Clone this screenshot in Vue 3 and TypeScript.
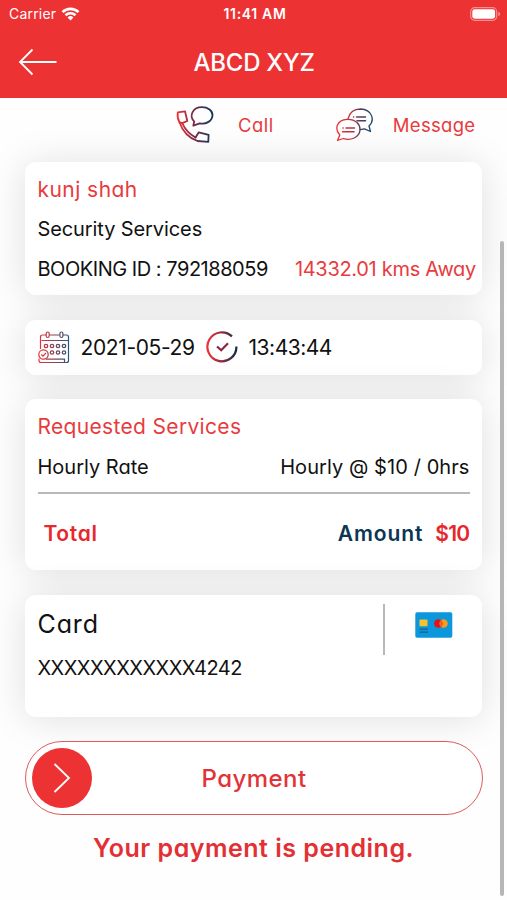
<script setup lang="ts">
interface Booking {
  customer: string
  service: string
  id: string
  distance: string
  date: string
  time: string
}

const booking: Booking = {
  customer: 'kunj shah',
  service: 'Security Services',
  id: '792188059',
  distance: '14332.01 kms Away',
  date: '2021-05-29',
  time: '13:43:44',
}
</script>

<template>
  <div class="screen">
    <header class="header">
      <div class="status">
        <div class="carrier">
          <span>Carrier</span>
          <svg width="19" height="14" viewBox="0 0 19 14">
            <path d="M.6 4.2a12.7 12.7 0 0 1 17.8 0l-1.8 1.9a10.1 10.1 0 0 0-14.2 0z" />
            <path d="M3.6 7.3a8.5 8.5 0 0 1 11.8 0l-1.8 1.9a5.9 5.9 0 0 0-8.2 0z" />
            <path d="M6.6 10.4a4.2 4.2 0 0 1 5.8 0l-2.9 3z" />
          </svg>
        </div>
        <span class="clock">11:41 AM</span>
        <svg class="battery" width="31" height="14" viewBox="0 0 31 14">
          <rect x=".7" y=".7" width="26" height="12.6" rx="4" fill="none" stroke="#fff" stroke-opacity=".45" stroke-width="1.2" />
          <rect x="2.3" y="2.3" width="22.8" height="9.4" rx="2.4" />
          <path d="M28.4 4.8c2.2.8 2.2 3.6 0 4.4z" opacity=".5" />
        </svg>
      </div>
      <div class="nav">
        <svg class="back" width="40" height="28" viewBox="0 0 40 28">
          <path d="M38.500 14H2M14.500 1.500L2 14l12.500 12.500" />
        </svg>
        <h1 class="title">ABCD XYZ</h1>
      </div>
    </header>

    <main class="body">
      <div class="actions">
        <button class="action">
          <svg width="38" height="38" viewBox="0 0 38 38">
            <defs>
              <linearGradient id="callTone" gradientUnits="userSpaceOnUse" x1="2" y1="0" x2="37" y2="0">
                <stop offset="0" stop-color="#ed3234" />
                <stop offset=".45" stop-color="#7a2b48" />
                <stop offset="1" stop-color="#0b3a58" />
              </linearGradient>
            </defs>
            <g fill="none" stroke="url(#callTone)" stroke-width="1.800" stroke-linejoin="round" stroke-linecap="round">
              <path d="M18.200 15.500C12.500 9.500 17 1.200 26 1.200C32 1.200 36.500 4.500 36.500 9C36.500 15 30 18.600 23.800 17.300L17.300 19.600Z" />
              <path d="M1.800 6.300L9 5.300L11.300 15L6.200 17.200L3.400 16.200C1.700 13 1.300 9.500 1.800 6.300Z" />
              <path d="M6.200 17.200C9 23.500 13 28 19.500 31.500" />
              <path d="M3.400 16.200C6.500 25 13 32 21.500 35L32.300 35.800L32.600 28.800L22.800 26.300L19.500 31.500" />
            </g>
          </svg>
          <span class="call">Call</span>
        </button>
        <button class="action">
          <svg width="38" height="34" viewBox="0 0 38 34">
            <defs>
              <linearGradient id="chatTone" gradientUnits="userSpaceOnUse" x1="1" y1="0" x2="37" y2="0">
                <stop offset="0" stop-color="#ed3234" />
                <stop offset=".4" stop-color="#c03340" />
                <stop offset=".72" stop-color="#48405a" />
                <stop offset="1" stop-color="#0f4a70" />
              </linearGradient>
            </defs>
            <g fill="none" stroke="url(#chatTone)" stroke-width="1.300" stroke-linejoin="round" stroke-linecap="round">
              <path d="M2.500 32.500L4.800 27C-1 20.500 2 12 12 11.300C21 11 25.300 16.500 25 22C24.500 29.500 15.500 33 8.300 30.500Z" />
              <path d="M13 11C14.500 4.500 19.500 1 25.500 1C37.500 1.500 40 12.500 34 18L35.500 23.500L29.500 20.800L25 21.700" />
              <path d="M8 20h.2M11 20h8.500M7.500 23.800h11.500M18.500 9h.2M21.500 9h9M22 12.700h8.500" stroke-width="1.500" />
            </g>
          </svg>
          <span class="message">Message</span>
        </button>
      </div>

      <section class="card details">
        <p class="row name">{{ booking.customer }}</p>
        <p class="row service">{{ booking.service }}</p>
        <p class="row split">
          <span class="id">BOOKING ID : {{ booking.id }}</span>
          <span class="away">{{ booking.distance }}</span>
        </p>
      </section>

      <section class="card schedule">
        <svg width="32" height="33" viewBox="0 0 32 33">
          <defs>
            <linearGradient id="calTone" gradientUnits="userSpaceOnUse" x1="1" y1="0" x2="31" y2="0">
              <stop offset="0" stop-color="#ed3234" />
              <stop offset=".5" stop-color="#8a4254" />
              <stop offset="1" stop-color="#205a80" />
            </linearGradient>
          </defs>
          <g fill="none" stroke="url(#calTone)" stroke-width="1.200">
            <path d="M2.500 18V6Q2.500 4 4.500 4H8M11.500 4H21.500M25 4H28.500Q30.500 4 30.500 6V29.500Q30.500 31.500 28.500 31.500H3Q1 31.500 1 29.500V27.500M3.500 9.500H30M8 28.200H26.500V31" />
            <rect x="8.200" y="1" width="3" height="5.500" rx="1.500" />
            <rect x="21.900" y="1" width="3" height="5.500" rx="1.500" />
            <circle cx="5.500" cy="23.500" r="4.700" />
            <path d="M3.300 23.500L5 25.200L8 21.800" />
            <g stroke-width="1.300">
              <circle cx="8" cy="15" r="1.700" /><circle cx="14" cy="15" r="1.700" /><circle cx="20" cy="15" r="1.700" /><circle cx="26" cy="15" r="1.700" />
              <circle cx="14" cy="21.500" r="1.700" /><circle cx="20" cy="21.500" r="1.700" /><circle cx="26" cy="21.500" r="1.700" />
            </g>
          </g>
        </svg>
        <span class="date">{{ booking.date }}</span>
        <svg class="tick" width="32" height="32" viewBox="0 0 32 32">
          <defs>
            <linearGradient id="tickTone" gradientUnits="userSpaceOnUse" x1="1" y1="0" x2="31" y2="0">
              <stop offset="0" stop-color="#ed3234" />
              <stop offset=".4" stop-color="#a82c3c" />
              <stop offset="1" stop-color="#0b2f4a" />
            </linearGradient>
          </defs>
          <g fill="none" stroke="url(#tickTone)" stroke-width="2.200">
            <path d="M26 5.400A14.500 14.500 0 1 0 30.400 15.500" />
            <path d="M11 15.500L15.200 19.300L22 12.300" stroke="#8a2744" />
          </g>
        </svg>
        <span class="time">{{ booking.time }}</span>
      </section>

      <section class="card services">
        <p class="row heading">Requested Services</p>
        <p class="row split">
          <span class="rate">Hourly Rate</span>
          <span class="price">Hourly @ $10 / 0hrs</span>
        </p>
        <hr class="rule" />
        <p class="row totals">
          <span class="total">Total</span>
          <span class="amount">Amount</span>
          <span class="sum">$10</span>
        </p>
      </section>

      <section class="card payment-card">
        <div class="card-text">
          <p class="card-title">Card</p>
          <p class="card-number">XXXXXXXXXXXX4242</p>
        </div>
        <div class="divider"></div>
        <svg class="card-icon" width="38" height="26" viewBox="0 0 38 26">
          <rect x=".3" y=".3" width="37" height="25.400" rx="1.800" fill="#0c97dc" />
          <rect x="4.500" y="7.500" width="8" height="6.700" rx=".8" fill="#f6c12f" />
          <path d="M4.500 17.200h8.500M4.500 20.200h8.500" stroke="#17608f" stroke-width="1.300" />
          <circle cx="28.500" cy="11.500" r="4.300" fill="#f79a1e" />
          <circle cx="23.300" cy="11.500" r="4.300" fill="#e0131f" />
          <path d="M25.900 8.100a4.300 4.300 0 0 1 0 6.800a4.300 4.300 0 0 1 0-6.800z" fill="#f0641e" />
        </svg>
      </section>

      <button class="pay">
        <span class="knob">
          <svg width="20" height="32" viewBox="0 0 20 32">
            <path d="M2.500 2L17 16L2.500 30" />
          </svg>
        </span>
        <span class="pay-label">Payment</span>
      </button>
      <p class="pending">Your payment is pending.</p>
    </main>
    <div class="scrollbar"></div>
  </div>
</template>

<style>
body {
  margin: 0;
  background: #fff;
}
</style>

<style scoped>
.screen {
  position: relative;
  width: 507px;
  height: 900px;
  overflow: hidden;
  background: #fefefe;
  color: #111;
  font-family: Inter, "Noto Sans", sans-serif;
  font-size: 20px;
  font-feature-settings: "cv11";
  white-space: nowrap;
}
p,
h1 {
  margin: 0;
  font-weight: 400;
}
button {
  padding: 0;
  border: 0;
  background: none;
  color: inherit;
  font: inherit;
  font-feature-settings: inherit;
}
.header {
  position: relative;
  z-index: 2;
  height: 98px;
  background: #ed3234;
  color: #fff;
}
.status {
  display: grid;
  grid-template-columns: 1fr auto 1fr;
  align-items: center;
  height: 27px;
  padding: 0 6px 0 9px;
  font-size: 14px;
  font-feature-settings: normal;
}
.status svg {
  fill: #fff;
}
.carrier {
  display: flex;
  gap: 5px;
  align-items: center;
  letter-spacing: 0.200px;
}
.clock {
  font-weight: 600;
  letter-spacing: 0.650px;
}
.battery {
  justify-self: end;
}
.nav {
  display: grid;
  grid-template-columns: 60px 1fr 60px;
  align-items: center;
  height: 70px;
}
.back {
  margin-left: 18px;
  fill: none;
  stroke: #fff;
  stroke-width: 1.800;
}
.title {
  padding-left: 1px;
  text-align: center;
  font-size: 24px;
  font-weight: 500;
  letter-spacing: -0.250px;
}
.body {
  padding: 0 25px;
}
.actions {
  display: flex;
  height: 54px;
  margin-bottom: 10px;
  padding-left: 151px;
  align-items: center;
  color: #e83b3e;
  font-size: 18.500px;
}
.action {
  display: flex;
  align-items: center;
  gap: 24px;
}
.action + .action {
  margin-left: 61px;
  gap: 20px;
}
.call {
  letter-spacing: 0.500px;
}
.message {
  letter-spacing: 0.300px;
}
.card {
  box-sizing: border-box;
  margin-bottom: 24.500px;
  padding: 0 12.500px;
  border-radius: 11px;
  background: #fff;
  box-shadow: 0 2px 38px rgba(0, 0, 0, 0.125);
}
.row {
  display: flex;
  height: 40px;
  align-items: center;
}
.split {
  justify-content: space-between;
}
.details {
  height: 133px;
  padding-top: 7px;
  padding-right: 6px;
}
.name,
.heading {
  color: #e83b3e;
  font-size: 21px;
}
.name {
  letter-spacing: 0.450px;
}
.heading {
  letter-spacing: 0.330px;
}
.service {
  letter-spacing: -0.100px;
}
.id {
  letter-spacing: -0.470px;
}
.away {
  color: #e83b3e;
  letter-spacing: -0.300px;
}
.schedule {
  display: flex;
  height: 55px;
  align-items: center;
  font-size: 21px;
}
.date {
  margin-left: 11px;
  letter-spacing: -0.380px;
}
.tick {
  margin: 0 11px 0 11px;
}
.time {
  letter-spacing: -0.500px;
}
.services {
  height: 171px;
  padding-top: 7.500px;
}
.price {
  letter-spacing: 0.080px;
}
.rule {
  height: 1.500px;
  margin: 5.500px 0 0;
  border: 0;
  background: #b8b8b8;
}
.totals {
  height: 79px;
  padding-left: 6px;
  color: #e6282c;
  font-size: 21px;
  font-weight: 600;
}
.total {
  letter-spacing: 0.650px;
}
.amount {
  margin-left: auto;
  color: #0b3552;
  letter-spacing: 0.900px;
}
.sum {
  margin-left: 12px;
  letter-spacing: -0.700px;
}
.payment-card {
  display: flex;
  height: 122px;
}
.card-title {
  padding-top: 9px;
  font-size: 25px;
  letter-spacing: 0.900px;
  line-height: 40px;
}
.card-number {
  letter-spacing: -0.530px;
  line-height: 48px;
}
.card-text {
  width: 345.500px;
}
.divider {
  width: 2px;
  height: 51px;
  margin-top: 9.500px;
  background: #b8b8b8;
}
.card-icon {
  margin: 17px 0 0 30px;
}
.pay {
  position: relative;
  display: flex;
  box-sizing: border-box;
  width: 458px;
  height: 74px;
  align-items: center;
  padding: 0 6px;
  border: 1.500px solid #e05a5c;
  border-radius: 37px;
  background: #fff;
}
.knob {
  display: grid;
  width: 60px;
  height: 60px;
  place-items: center;
  border-radius: 50%;
  background: #ed3234;
}
.knob path {
  fill: none;
  stroke: #fff;
  stroke-width: 1.800;
}
.pay-label {
  flex: 1;
  padding-right: 60px;
  color: #e23337;
  font-size: 24px;
  font-weight: 500;
  letter-spacing: 0.450px;
  text-align: center;
}
.pending {
  color: #e23034;
  font-size: 25px;
  font-weight: 600;
  letter-spacing: 0.500px;
  line-height: 66px;
  text-align: center;
}
.scrollbar {
  position: absolute;
  z-index: 3;
  top: 241px;
  right: 3px;
  width: 4px;
  height: 655px;
  border-radius: 2px;
  background: #b6b6b6;
}
</style>
